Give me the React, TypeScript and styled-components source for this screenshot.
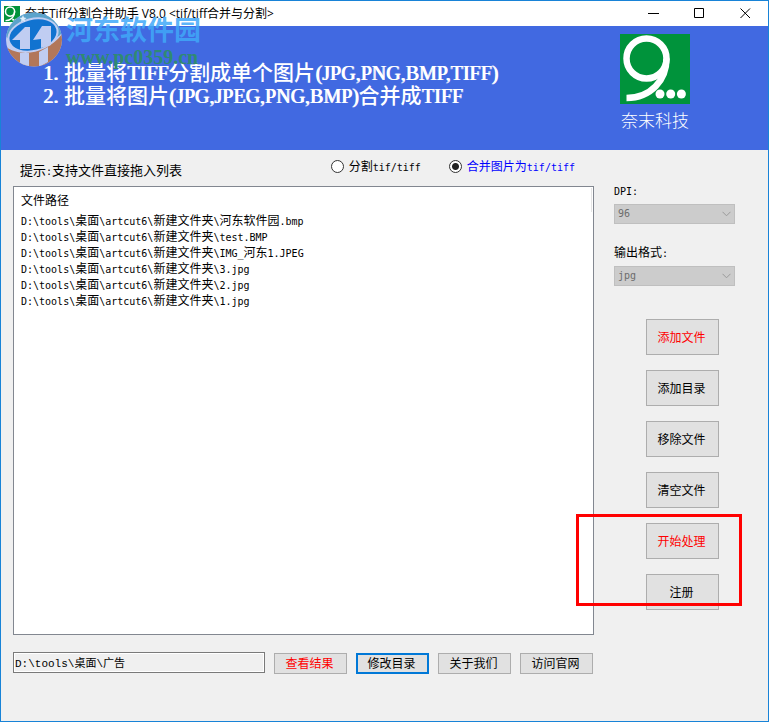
import React, { useState } from "react";
import styled, { createGlobalStyle, css } from "styled-components";

const GlobalStyle = createGlobalStyle`
  *, *::before, *::after { box-sizing: border-box; }
  body {
    margin: 0;
    background: #f0f0f0;
    color: #000;
    font-family: "Noto Sans CJK SC", sans-serif;
    font-size: 12px;
    line-height: 16px;
  }
  button, input, select { font: inherit; color: inherit; margin: 0; }
`;

const Window = styled.div`
  display: flex;
  flex-direction: column;
  min-height: 100vh;
  border: 1px solid #1883d7;
  background: #f0f0f0;
`;

const TitleBar = styled.header`
  display: flex;
  align-items: center;
  height: 25px;
  padding-left: 3px;
  gap: 5px;
  background: #fff;
`;

const Title = styled.h1`
  flex: 1;
  margin: 0;
  font-family: "Open Sans", "Noto Sans CJK SC", sans-serif;
  font-size: 12px;
  font-weight: 400;
  line-height: 24px;
  white-space: nowrap;
`;

const CaptionButtons = styled.div`
  display: flex;
`;

const CaptionButton = styled.button`
  display: flex;
  align-items: center;
  justify-content: center;
  width: 46px;
  height: 25px;
  padding: 0;
  border: 0;
  background: transparent;
`;

const Banner = styled.section`
  position: relative;
  display: flex;
  justify-content: space-between;
  align-items: flex-start;
  height: 124px;
  padding: 8px 78px 0 42px;
  background: #4169e1;
  color: #fff;
`;

const Features = styled.ol`
  margin: 26px 0 0;
  padding: 0;
  list-style: none;
  font-size: 21px;
  font-weight: 500;
  line-height: 23px;
  white-space: nowrap;
  li {
    display: flex;
    height: 23px;
  }
`;

const FeatureNumber = styled.span`
  width: 21px;
`;

const Brand = styled.div`
  display: flex;
  flex-direction: column;
  align-items: center;
  gap: 4px;
  font-size: 17px;
  font-weight: 300;
  line-height: 24px;
`;

const Watermark = styled.div`
  position: absolute;
  left: 4px;
  top: -15px;
  display: flex;
  gap: 3px;
  pointer-events: none;
`;

const WatermarkText = styled.div`
  display: flex;
  flex-direction: column;
  white-space: nowrap;
`;

const WatermarkName = styled.span`
  color: rgba(64, 168, 248, 0.85);
  font-size: 27px;
  font-weight: 700;
  line-height: 35px;
`;

const WatermarkSite = styled.span`
  color: #2f8a72;
  font-family: "Liberation Serif", serif;
  font-size: 20px;
  font-weight: 700;
  line-height: 22px;
`;

const Body = styled.main`
  flex: 1;
  display: grid;
  grid-template-columns: minmax(0, 1fr) 174px;
`;

const FilesColumn = styled.div`
  display: flex;
  flex-direction: column;
  padding: 0 0 47px 12px;
`;

const ModeRow = styled.div`
  display: flex;
  align-items: flex-start;
  justify-content: space-between;
  height: 36px;
  padding: 8px 19px 0 7px;
  white-space: nowrap;
`;

const Hint = styled.span`
  margin-top: 4px;
  font-size: 13px;
`;

const Modes = styled.div`
  display: flex;
  gap: 28px;
`;

const Mode = styled.label<{ $active: boolean }>`
  display: flex;
  align-items: center;
  gap: 5px;
  color: ${(p) => (p.$active ? "#0000ff" : "#000")};
`;

const Radio = styled.input`
  appearance: none;
  width: 13px;
  height: 13px;
  border: 1px solid #333;
  border-radius: 50%;
  background: #fff;
  &:checked {
    background: radial-gradient(circle, #222 0 3px, #fff 4px);
  }
`;

const ListBox = styled.div`
  flex: 1;
  padding: 1px;
  border: 1px solid #828790;
  background: #fff;
`;

const FileTable = styled.table`
  width: 100%;
  border-collapse: collapse;
  text-align: left;
  white-space: nowrap;
  th {
    height: 24px;
    padding: 0 6px;
    border-right: 1px solid #e5e5e5;
    font-weight: 400;
  }
  td {
    height: 16px;
    padding: 0 6px;
  }
`;

const BottomRow = styled.div`
  display: flex;
  align-items: flex-start;
  margin-top: 17px;
  padding-right: 1px;
`;

const PathInput = styled.input`
  flex: 1;
  min-width: 0;
  height: 21px;
  margin-right: 9px;
  padding: 0 1px 2px;
  border: 1px solid #7a7a7a;
  background: #f0f0f0;
  box-shadow: inset 0 0 0 1px #fff;
  font-family: "Liberation Mono", "Noto Sans CJK SC", monospace;
  font-size: 11px;
`;

const BottomButtons = styled.div`
  display: flex;
  gap: 9px;
  padding-top: 1px;
`;

const PushButton = styled.button<{ $small?: boolean; $red?: boolean; $focused?: boolean }>`
  width: 73px;
  height: ${(p) => (p.$small ? "21px" : "36px")};
  padding: 0 2px 1px 0;
  border: 1px solid #adadad;
  background: #e1e1e1;
  color: ${(p) => (p.$red ? "#ff0000" : "#000")};
  white-space: nowrap;
  ${(p) =>
    p.$focused &&
    css`
      border: 2px solid #0078d7;
    `}
`;

const SideColumn = styled.aside`
  display: flex;
  flex-direction: column;
  padding: 32px 0 0 20px;
`;

const Field = styled.div`
  display: flex;
  flex-direction: column;
  gap: 6px;
  width: 121px;
  margin-bottom: 20px;
`;

const FieldLabel = styled.label`
  height: 16px;
`;

const SelectBox = styled.div`
  position: relative;
  svg {
    position: absolute;
    right: 4px;
    top: 7px;
    pointer-events: none;
  }
`;

const Select = styled.select`
  appearance: none;
  display: block;
  width: 100%;
  height: 20px;
  padding: 0 3px;
  border: 1px solid #bfbfbf;
  border-radius: 0;
  background: #ccc;
  color: #6d6d6d;
  opacity: 1;
  font-family: "DejaVu Sans Mono", monospace;
  font-size: 10px;
`;

const Actions = styled.div`
  display: flex;
  flex-direction: column;
  gap: 15px;
  padding: 13px 0 0 32px;
`;

const MarkedActions = styled.div`
  position: relative;
  display: flex;
  flex-direction: column;
  gap: 15px;
  width: 73px;
  &::after {
    content: "";
    position: absolute;
    top: -9px;
    right: -23px;
    bottom: 4px;
    left: -70px;
    border: 3px solid #ff0000;
    pointer-events: none;
  }
`;

const Mono = styled.span`
  font-family: "DejaVu Sans Mono", monospace;
  font-size: 10px;
  line-height: 1;
`;

const Serif = styled.span`
  font-family: "Liberation Serif", serif;
  font-size: 20px;
  font-weight: 400;
  line-height: 1;
  text-shadow: 1px 0 0 #fff;
`;

/* Sets the Latin runs of a mixed string in their own face. */
function Mixed({ text, latin: Latin = Mono }: { text: string; latin?: React.ElementType }) {
  return (
    <>
      {text.split(/([\x20-\x7e]+)/).map((run, i) => (i % 2 ? <Latin key={i}>{run}</Latin> : run))}
    </>
  );
}

function NineLogo({ size }: { size: number }) {
  return (
    <svg width={size} height={size} viewBox="0 0 70 70" aria-hidden="true">
      <rect width="70" height="70" fill="#00933b" />
      <g fill="none" stroke="#fff" strokeWidth="6.5">
        <circle cx="26.5" cy="24.5" r="20" />
        <path d="M46.5 24.5C46.5 46 31 64 6.5 64" />
      </g>
      <g fill="#fff">
        <circle cx="40" cy="60" r="4.5" />
        <circle cx="50.7" cy="60" r="4.5" />
        <circle cx="61.4" cy="60" r="4.5" />
      </g>
    </svg>
  );
}

function GlobeMark() {
  return (
    <svg width="58" height="56" viewBox="0 0 58 56" aria-hidden="true">
      <defs>
        <clipPath id="globe">
          <ellipse cx="29" cy="28.5" rx="28" ry="27" />
        </clipPath>
      </defs>
      <g clipPath="url(#globe)">
        <rect width="58" height="56" fill="#c0cdf2" />
        <path d="M0 0H58V20C50 36 4 34 0 24Z" fill="#5ba3cb" />
        <ellipse cx="28" cy="24" rx="26" ry="17" fill="#c0cdf2" transform="rotate(-14 28 24)" />
        <ellipse cx="28" cy="24" rx="24" ry="15" fill="#1173d0" transform="rotate(-14 28 24)" />
        <path d="M0 35C14 47 42 44 58 22V56H0Z" fill="#b2775a" />
        <path d="M15 42H24V56H15ZM34 41L43 36V51L34 56Z" fill="#c0cdf2" />
        <path d="M7 29L20 16H25V38H15V29ZM28 29L37 15H46V34L36 37V28Z" fill="#c0cdf2" />
        <path d="M18 4L19 6.5L21.500 7L19.500 8.500L20 11L18 9.500L16 11L16.500 8.500L14.500 7L17 6.500Z" fill="#e0eefa" />
      </g>
    </svg>
  );
}

function Chevron() {
  return (
    <svg width="9" height="6" viewBox="0 0 9 6" fill="none" stroke="#9a9a9a" aria-hidden="true">
      <path d="M.5 .8L4.5 4.8L8.5 .8" />
    </svg>
  );
}

const features = [
  "批量将TIFF分割成单个图片(JPG,PNG,BMP,TIFF)",
  "批量将图片(JPG,JPEG,PNG,BMP)合并成TIFF",
];

const files = ["河东软件园.bmp", "test.BMP", "IMG_河东1.JPEG", "3.jpg", "2.jpg", "1.jpg"];
const folder = "D:\\tools\\桌面\\artcut6\\新建文件夹\\";

const modes = [
  { id: "split", label: "分割tif/tiff" },
  { id: "merge", label: "合并图片为tif/tiff" },
];

const fields = [
  { id: "dpi", label: "DPI:", value: "96" },
  { id: "format", label: "输出格式:", value: "jpg" },
];

export default function App() {
  const [mode, setMode] = useState("merge");
  return (
    <>
      <GlobalStyle />
      <Window>
        <TitleBar>
          <NineLogo size={16} />
          <Title>奈末Tiff分割合并助手 V8.0 &lt;tif/tiff合并与分割&gt;</Title>
          <CaptionButtons>
            <CaptionButton aria-label="最小化">
              <svg width="11" height="11" stroke="#000"><path d="M0 5.5H11" /></svg>
            </CaptionButton>
            <CaptionButton aria-label="最大化">
              <svg width="11" height="11" stroke="#000" fill="none"><path d="M.5 .5H9.5V9.5H.5Z" /></svg>
            </CaptionButton>
            <CaptionButton aria-label="关闭">
              <svg width="11" height="11" stroke="#000"><path d="M.5 .5L10 10M10 .5L.5 10" /></svg>
            </CaptionButton>
          </CaptionButtons>
        </TitleBar>
        <Banner>
          <Watermark>
            <GlobeMark />
            <WatermarkText>
              <WatermarkName>河东软件园</WatermarkName>
              <WatermarkSite>www.pc0359.cn</WatermarkSite>
            </WatermarkText>
          </Watermark>
          <Features>
            {features.map((text, i) => (
              <li key={text}>
                <FeatureNumber><Serif>{i + 1}.</Serif></FeatureNumber>
                <span><Mixed latin={Serif} text={text} /></span>
              </li>
            ))}
          </Features>
          <Brand>
            <NineLogo size={70} />
            <span>奈末科技</span>
          </Brand>
        </Banner>
        <Body>
          <FilesColumn>
            <ModeRow>
              <Hint><Mixed text="提示:支持文件直接拖入列表" /></Hint>
              <Modes>
                {modes.map((m) => (
                  <Mode key={m.id} $active={mode === m.id}>
                    <Radio type="radio" name="mode" checked={mode === m.id} onChange={() => setMode(m.id)} />
                    <span><Mixed text={m.label} /></span>
                  </Mode>
                ))}
              </Modes>
            </ModeRow>
            <ListBox>
              <FileTable>
                <thead>
                  <tr><th scope="col">文件路径</th></tr>
                </thead>
                <tbody>
                  {files.map((f) => (
                    <tr key={f}><td><Mixed text={folder + f} /></td></tr>
                  ))}
                </tbody>
              </FileTable>
            </ListBox>
            <BottomRow>
              <PathInput aria-label="输出目录" readOnly value={"D:\\tools\\桌面\\广告"} />
              <BottomButtons>
                <PushButton $small $red>查看结果</PushButton>
                <PushButton $small $focused>修改目录</PushButton>
                <PushButton $small>关于我们</PushButton>
                <PushButton $small>访问官网</PushButton>
              </BottomButtons>
            </BottomRow>
          </FilesColumn>
          <SideColumn>
            {fields.map((f) => (
              <Field key={f.id}>
                <FieldLabel htmlFor={f.id}><Mixed text={f.label} /></FieldLabel>
                <SelectBox>
                  <Select id={f.id} disabled defaultValue={f.value}>
                    <option>{f.value}</option>
                  </Select>
                  <Chevron />
                </SelectBox>
              </Field>
            ))}
            <Actions>
              <PushButton $red>添加文件</PushButton>
              <PushButton>添加目录</PushButton>
              <PushButton>移除文件</PushButton>
              <PushButton>清空文件</PushButton>
              <MarkedActions>
                <PushButton $red>开始处理</PushButton>
                <PushButton>注册</PushButton>
              </MarkedActions>
            </Actions>
          </SideColumn>
        </Body>
      </Window>
    </>
  );
}
